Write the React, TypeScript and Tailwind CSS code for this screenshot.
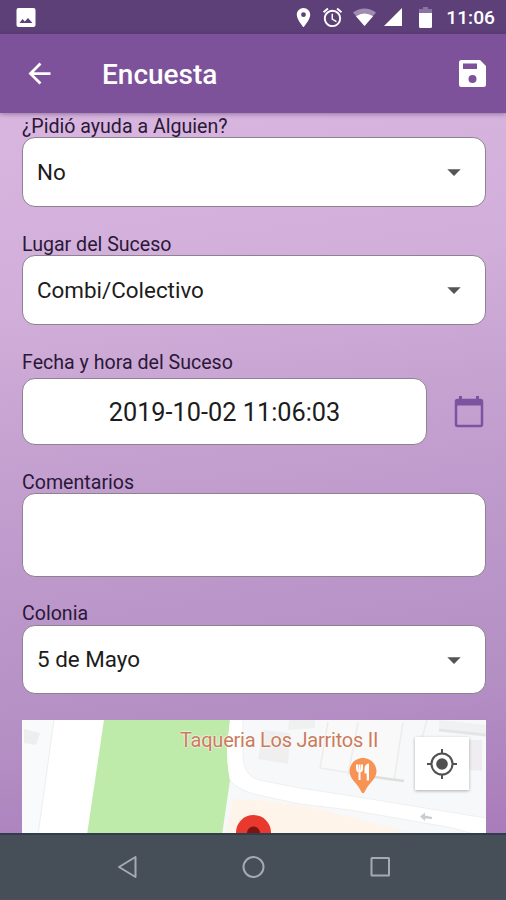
import React from 'react';
import {
  MdAccessAlarm,
  MdArrowBack,
  MdArrowDropDown,
  MdLocationOn,
} from 'react-icons/md';

interface FieldProps {
  label: string;
  className?: string;
  labelClass?: string;
  children: React.ReactNode;
}

const Field: React.FC<FieldProps> = ({ label, className = '', labelClass = 'h-6 leading-[27px]', children }) => (
  <div className={className}>
    <div className={`${labelClass} text-[19.6px] text-[#2a1838] whitespace-nowrap`}>
      {label}
    </div>
    {children}
  </div>
);

const Select: React.FC<{ value: string; className?: string }> = ({ value, className = 'h-[70px]' }) => (
  <button
    className={`${className} flex w-full items-center justify-between rounded-[13px] border border-[#8c8290] bg-white pl-[14px] pr-[15px] text-left text-[22.4px] text-[#1c1c1c]`}
  >
    <span className="pt-px">{value}</span>
    <MdArrowDropDown size={32} className="text-[#555]" />
  </button>
);

const StatusBar = () => (
  <div className="flex h-[34px] shrink-0 items-center bg-[#5e4079] pl-4 pr-[11px] text-white">
    <svg width="20" height="20" viewBox="0 0 20 20" className="mt-px">
      <rect x="0.5" y="0" width="19" height="19" rx="2" fill="currentColor" />
      <path d="M3.500 15l3-4 2.300 2.600L12 10l4.500 5z" fill="#5e4079" />
    </svg>
    <div className="ml-auto flex items-center">
      <MdLocationOn size={23} className="mr-[6px]" />
      <MdAccessAlarm size={23} className="mr-[9px]" />
      <svg width="23" height="19" viewBox="0 0 23 19" className="mr-[8px]">
        <path d="M0 4.500Q11.500-3.500 23 4.500L11.500 18z" fill="#a08bb2" />
        <path d="M3 8.300Q11.500 2.500 20 8.300L11.500 18z" fill="currentColor" />
      </svg>
      <svg width="18" height="18" viewBox="0 0 18 18" className="mr-[17px]">
        <path d="M18 0v18H0z" fill="currentColor" />
      </svg>
      <svg width="13" height="21" viewBox="0 0 13 21" className="mr-[14px]">
        <path d="M4 0h5v2h4v5H0V2h4z" fill="#8c72a0" />
        <path d="M0 6h13v13.500a1.500 1.500 0 0 1-1.500 1.500h-10A1.500 1.500 0 0 1 0 19.500z" fill="currentColor" />
      </svg>
      <span className="pt-[2px] text-[19.2px] font-medium leading-none">11:06</span>
    </div>
  </div>
);

const AppBar = () => (
  <header className="z-10 flex h-[79px] shrink-0 items-center bg-[#7d529b] pl-[23px] pr-[20px] text-white shadow-[0_1px_5px_rgba(60,30,80,0.45)]">
    <MdArrowBack size={33} />
    <h1 className="ml-[46px] pt-[3px] text-[28px] font-medium leading-none">Encuesta</h1>
    <svg width="27" height="27" viewBox="0 0 27 27" className="ml-auto">
      <path
        d="M2.500 0H21L27 6V24.500a2.500 2.500 0 0 1-2.500 2.500h-22A2.500 2.500 0 0 1 0 24.500V2.500A2.500 2.500 0 0 1 2.500 0z"
        fill="currentColor"
      />
      <rect x="4" y="3.500" width="14" height="5.500" fill="#7d529b" />
      <circle cx="13.500" cy="19" r="4" fill="#7d529b" />
    </svg>
  </header>
);

const MapView = () => (
  <div className="relative mt-[26px] h-[114px] w-[464px] overflow-hidden bg-[#f7f8f9]">
    <svg width="464" height="115" viewBox="0 0 464 115" className="block">
      {/* blocks and buildings */}
      <path d="M0 0H32L16 115H0z" fill="#f8fafb" />
      <path d="M2 9L18 13L14 25L2 23z" fill="#edefef" />
      <path d="M32 0H82L65 115H16z" fill="#fff" />
      <path d="M32 0L16 115" stroke="#eceeef" />
      <path d="M82 0H208L205 28Q205 45 208 60L200 115H65z" fill="#beeaaa" />
      <path d="M211 79Q270 81 320 95L398 115H203z" fill="#fef4ea" />
      <path
        d="M208 0H221V37Q222 56 237 60L278 68L330 76L464 98V115H455L431 108L328 90L278 84L236 75Q215 70 208 60Q205 45 205 28z"
        fill="#fff"
      />
      <path d="M221 0V37Q222 56 237 60L278 68L330 76L464 98" fill="none" stroke="#eff0f1" />
      <path d="M208 60Q215 70 236 75L278 84L328 90L431 108L455 115" fill="none" stroke="#eff0f1" />
      <path d="M241 10L268 13L266 44L236 39z" fill="#efefef" />
      <path d="M267 0H293V8L266 10z" fill="#eff0f0" />
      <path d="M300 0L297 48L372 60L382 0z" fill="#f9f9f9" />
      <path d="M306 2L298 48L372 60M336 3L326 55M381 2L372 60M405 0L398 25" fill="none" stroke="#ececed" strokeWidth="1.500" />
      <path d="M345 56L382 61" stroke="#dededf" strokeWidth="2.500" />
      <path d="M417 0L464 5V15L417 10z" fill="#f1f1f2" />
      <path d="M417 10L464 15" stroke="#e4e5e6" strokeWidth="3" />
      <path d="M447 20H460V51L447 50z" fill="#efedf0" />
      {/* restaurant pin */}
      <path d="M341 38c-7.500 0-13.500 6-13.500 13.300 0 8 8.500 12.500 11.800 20.500q1.700 3 3.400 0c3.300-8 11.800-12.500 11.800-20.500C354.500 44 348.500 38 341 38z" fill="#f69355" />
      <path d="M335 44.500v3.500q0 3.500 2.500 3.500t2.500-3.500v-3.500M337.500 44.500V60" fill="none" stroke="#fff" strokeWidth="2" />
      <path d="M347 43.500v17h-2.300v-7h-2.200v-4.500q0-5 4.500-5.500z" fill="#fff" />
      {/* one-way arrow */}
      <path d="M398 96.500l5-4v3l7 1.500v2l-7-.5v2.500z" fill="#c9cdd3" />
      {/* selected place */}
      <circle cx="231.500" cy="112.500" r="17.500" fill="#e9392f" />
      <circle cx="231.500" cy="113" r="6.500" fill="#7c1410" />
    </svg>
    <span className="absolute left-[158px] top-[8px] whitespace-nowrap text-[20px] leading-6 tracking-[-0.240px] text-[#cb7b5b] [text-shadow:0_0_2px_white,0_0_2px_white]">
      Taqueria Los Jarritos II
    </span>
    <button className="absolute left-[393px] top-[17px] flex h-[53px] w-[54px] items-center justify-center bg-white shadow-[0_1px_3px_rgba(0,0,0,0.3)]">
      <svg width="30" height="30" viewBox="0 0 30 30" className="text-[#505050]">
        <circle cx="15" cy="15" r="10.500" fill="none" stroke="currentColor" strokeWidth="2" />
        <circle cx="15" cy="15" r="5.800" fill="currentColor" />
        <path d="M15 0v5M15 25v5M0 15h5M25 15h5" stroke="currentColor" strokeWidth="2" />
      </svg>
    </button>
  </div>
);

const NavBar = () => (
  <nav className="z-10 flex h-[67px] shrink-0 items-center justify-between border-t-2 border-[#303e4c] border-b border-b-[#584966] bg-[#464e57] pl-[117px] pr-[115px] text-[#a5aab0]">
    <svg width="20" height="24" viewBox="0 0 20 24" fill="none" stroke="currentColor" strokeWidth="2">
      <path d="M18.500 2v20L2 12z" strokeLinejoin="round" />
    </svg>
    <svg width="24" height="24" viewBox="0 0 24 24" fill="none" stroke="currentColor" strokeWidth="2">
      <circle cx="12.500" cy="12" r="10" />
    </svg>
    <svg width="22" height="22" viewBox="0 0 22 22" fill="none" stroke="currentColor" strokeWidth="2">
      <rect x="2.500" y="2" width="17.500" height="17.500" rx="0.500" />
    </svg>
  </nav>
);

const App: React.FC = () => {
  return (
    <div className="flex h-[900px] w-[506px] flex-col overflow-hidden font-[Roboto,sans-serif]">
      <StatusBar />
      <AppBar />
      <main className="h-[720px] shrink-0 overflow-hidden bg-[linear-gradient(172deg,#d8b6df_0%,#d2aeda_25%,#c6a2d1_42%,#bd98cb_60%,#b48fc4_80%,#a97cba_100%)] pl-[22px] pr-5">
        <Field label="¿Pidió ayuda a Alguien?">
          <Select value="No" />
        </Field>
        <Field label="Lugar del Suceso" className="mt-6">
          <Select value="Combi/Colectivo" />
        </Field>
        <Field label="Fecha y hora del Suceso" className="mt-6" labelClass="h-[29px] leading-[27px]">
          <div className="flex items-center justify-between">
            <div className="flex h-[67px] w-[405px] items-center justify-center rounded-[13px] border border-[#8c8290] bg-white pt-[2px] text-[25.3px] text-[#1c1c1c]">
              2019-10-02 11:06:03
            </div>
            <svg width="30" height="32" viewBox="0 0 30 32" className="mr-[2px] text-[#7d52a0]">
              <path d="M6.500 0v4M23.500 0v4" stroke="currentColor" strokeWidth="3" />
              <rect x="2" y="4" width="26" height="26" rx="1.500" fill="none" stroke="currentColor" strokeWidth="2.500" />
              <path d="M2 4h26v5.500H2z" fill="currentColor" />
            </svg>
          </div>
        </Field>
        <Field label="Comentarios" className="mt-6">
          <textarea className="block h-[84px] w-full resize-none rounded-[13px] border border-[#8c8290] bg-white p-3 text-[22px] outline-none" />
        </Field>
        <Field label="Colonia" className="mt-6" labelClass="h-6 leading-[25px]">
          <Select value="5 de Mayo" className="h-[69px]" />
        </Field>
        <MapView />
      </main>
      <NavBar />
    </div>
  );
};

export default App;
